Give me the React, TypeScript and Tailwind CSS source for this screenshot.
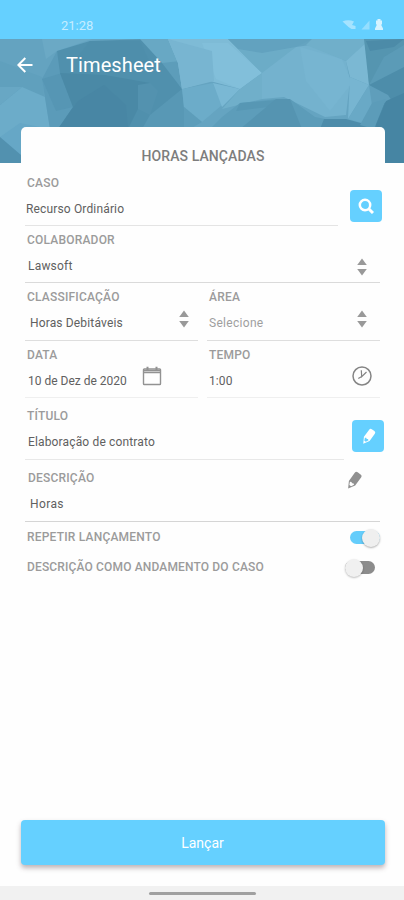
import React, { FC, ReactNode } from 'react';

interface FieldProps {
  label: string;
  value: string;
  className?: string;
  labelClass?: string;
  valueClass?: string;
  children?: ReactNode;
}

// Faceted header background: [points, color]
const facets: [string, string][] = [
  ['0,0 92,0 57,12 42,40 0,22', '#64a3c0'],
  ['42,0 92,0 57,12 46,20', '#6ba9c5'],
  ['0,22 42,38 45,66 0,66', '#60a0bd'],
  ['0,66 22,48 45,58 50,90 20,124 0,110', '#6cacc9'],
  ['0,48 22,48 0,66', '#68a7c4'],
  ['20,84 50,90 21,124 0,98', '#66a7c6'],
  ['0,98 21,116 21,124 0,124', '#5291af'],
  ['42,40 57,12 62,34 73,68 60,90 50,90', '#5b9bb9'],
  ['42,40 62,34 73,68 56,72', '#5696b4'],
  ['57,12 90,2 150,0 165,24 182,50 184,90 58,90 73,68 60,34', '#5090ad'],
  ['90,2 140,2 150,24 108,34 76,20', '#4e8eab'],
  ['60,34 105,36 150,44 138,70 128,90 58,90 73,68', '#4a89a6'],
  ['78,62 104,46 126,66 128,90 58,90', '#4886a4'],
  ['138,46 150,44 158,52 150,76 138,70', '#5392af'],
  ['150,76 182,50 186,90 142,90', '#5898b5'],
  ['140,0 202,0 180,24 162,24', '#68a8c4'],
  ['162,24 180,22 182,50', '#5d9dba'],
  ['168,0 228,0 262,34 240,50 210,42 182,50 178,24', '#7ebbd6'],
  ['202,4 228,4 262,34 240,50 216,40', '#82bfda'],
  ['168,0 212,12 214,42 182,50 178,24', '#78b5d1'],
  ['182,50 213,44 222,66 202,83 184,68', '#6cacc9'],
  ['213,44 240,50 222,68', '#7ab8d4'],
  ['184,68 202,83 190,90 184,90', '#5d9dba'],
  ['240,50 262,34 262,60 222,70', '#70afca'],
  ['228,0 312,0 296,8 262,14 238,10', '#62a2bf'],
  ['238,10 262,14 296,8 268,34 262,34', '#6cacc7'],
  ['296,8 310,6 346,22 350,42 346,76 325,78 284,58 262,60 262,34', '#74b2ce'],
  ['300,8 342,20 352,44 330,72 306,42', '#77b5d1'],
  ['312,0 366,0 366,6 346,22 306,6', '#70afca'],
  ['346,22 366,4 369,46 350,38', '#7bb8d3'],
  ['350,38 369,46 348,80', '#77b5d1'],
  ['369,46 376,60 370,86 348,80', '#69a9c6'],
  ['222,78 240,64 276,60 262,90 210,90', '#5d9dba'],
  ['240,64 290,60 284,66 236,72', '#5797b4'],
  ['276,60 290,60 310,90 240,90', '#5594b1'],
  ['290,60 315,78 325,80 330,90 302,90', '#5c9cb9'],
  ['324,80 346,80 368,86 370,90 320,90', '#4d8caa'],
  ['364,0 404,0 404,28 385,46 369,46', '#5595b0'],
  ['366,2 404,0 394,8 370,12', '#4c8ba8'],
  ['369,46 384,18 404,6 404,28 392,48', '#5b9bb7'],
  ['369,46 404,28 404,124 384,124 372,90 386,60', '#4d8daa'],
  ['369,46 388,56 392,62 372,66', '#5f9ebb'],
  ['372,64 386,60 374,90 360,86', '#5c9cb9'],
  ['386,62 404,54 404,124 384,124 376,86', '#4685a3'],
];

const HeaderBackground: FC = () => (
  <svg
    viewBox="0 0 404 124"
    className="absolute inset-0 h-full w-full"
    preserveAspectRatio="none"
  >
    <rect width="404" height="124" fill="#65a4c1" />
    {facets.map(([points, color]) => (
      <polygon key={points} points={points} fill={color} />
    ))}
  </svg>
);

const SortArrows: FC = () => (
  <svg viewBox="0 0 10 18" className="h-[18px] w-[10px]" fill="#999999">
    <path d="M5 0.5 9.8 7H0.2z" />
    <path d="M0.2 11h9.6L5 17.5z" />
  </svg>
);

const Pencil: FC<{ className: string }> = ({ className }) => (
  <svg viewBox="0 0 16 20" className={className} fill="currentColor">
    <g transform="rotate(36 8 10)">
      <path
        d="M3.900 3q0-2.200 2.200-2.200h3.800q2.200 0 2.200 2.200V13.500L8 20.500 3.900 13.500zM5.300 13.600 6.900 16.800h2.200l1.600-3.200-1.500-.8-1.200.8-1.200-.8z"
        fillRule="evenodd"
      />
    </g>
  </svg>
);

const CalendarIcon: FC = () => (
  <svg
    viewBox="0 0 20 20"
    className="h-5 w-5"
    fill="none"
    stroke="#929292"
    strokeWidth="1.4"
  >
    <rect x="1.5" y="3" width="17" height="15.5" rx="0.8" />
    <path d="M1.5 4.5h17M1.5 6.5h17" />
    <path d="M5.5 0.8v3.5M14.5 0.8v3.5" strokeWidth="2" />
  </svg>
);

const ClockIcon: FC = () => (
  <svg
    viewBox="0 0 20 20"
    className="h-5 w-5"
    fill="none"
    stroke="#858585"
    strokeWidth="1.5"
  >
    <circle cx="10" cy="10" r="9" />
    <path d="M9.3 4.2 9.7 10.6 14.5 6M9.7 10.6 6.3 12.6" strokeWidth="1.2" />
  </svg>
);

const Field: FC<FieldProps> = ({
  label,
  value,
  className = '',
  labelClass = '',
  valueClass = 'tracking-[0.1px]',
  children,
}) => (
  <div className={`flex justify-between border-b ${className}`}>
    <div className="flex flex-col gap-[10px] whitespace-nowrap">
      <span
        className={`text-[12px] leading-4 font-medium tracking-[0.2px] text-[#9b9b9b] ${labelClass}`}
      >
        {label}
      </span>
      <span className={`text-[12px] leading-4 text-[#606060] ${valueClass}`}>
        {value}
      </span>
    </div>
    {children}
  </div>
);

const App: FC = () => {
  return (
    <div className="flex h-[900px] w-[404px] flex-col overflow-hidden bg-[#fefefe] font-['Roboto',sans-serif]">
      {/* Status bar */}
      <div className="flex h-[39px] shrink-0 items-start justify-between bg-[#65d0ff] pt-[17px] pr-[21px] pl-[61px] text-[#c4edff]">
        <span className="text-[13px] leading-[18px]">21:28</span>
        <div className="flex items-center gap-[5px] pt-[2px]">
          <svg viewBox="0 0 14 11" className="h-[11px] w-[14px]" fill="#a5e3ff">
            <path d="M0.5 1.5Q6-1 12 1.5L10 5l3.5 1v3H9.5L6.5 7z" />
          </svg>
          <svg viewBox="0 0 9 10" className="h-[10px] w-[9px]" fill="#94deff">
            <path d="M8.5 0.5v9H0.5z" />
          </svg>
          <svg viewBox="0 0 8 12" className="h-[12px] w-[8px]" fill="#d7f3ff">
            <path d="M2.5 0h3v1.5H7v4H6l2 4V11H0V9.5l2-4H1v-4h1.5z" />
          </svg>
        </div>
      </div>

      {/* Header */}
      <header className="relative h-[124px] shrink-0">
        <HeaderBackground />
        <div className="relative flex items-center pt-[12px] pl-[17px] text-white">
          <svg
            viewBox="0 0 16 16"
            className="h-4 w-4"
            fill="none"
            stroke="currentColor"
            strokeWidth="2"
          >
            <path d="M15.5 8H2M8.3 1 1.3 8l7 7" />
          </svg>
          <h1 className="ml-[33px] text-[20px] leading-7 tracking-[0.1px]">
            Timesheet
          </h1>
        </div>
      </header>

      {/* Form card */}
      <main className="relative mr-[19px] ml-[21px] -mt-[36px] flex h-[460px] shrink-0 flex-col rounded-[5px] bg-[#fefefe] pr-[5px] pl-1">
        <h2 className="h-[41px] pt-[21px] pl-px text-center text-[14px] leading-4 font-medium tracking-[0.1px] text-[#7d7d7d]">
          HORAS LANÇADAS
        </h2>

        <div className="flex h-[58px] justify-between">
          <Field
            label="CASO"
            value="Recurso Ordinário"
            className="w-[313px] border-[#e4e4e4] pt-[7px] pl-[2px]"
            valueClass="-ml-px tracking-[0.15px]"
          />
          <button
            className="mt-[22px] mr-[-2px] flex h-8 w-8 items-center justify-center rounded-[4px] bg-[#65d0ff]"
            aria-label="Buscar caso"
          >
            <svg
              viewBox="0 0 16 16"
              className="h-4 w-4"
              fill="none"
              stroke="white"
            >
              <circle cx="7" cy="7" r="5.2" strokeWidth="2.5" />
              <path d="m10.7 10.7 4.3 4.3" strokeWidth="3" />
            </svg>
          </button>
        </div>

        <Field
          label="COLABORADOR"
          value="Lawsoft"
          className="h-[57px] border-[#dadada] pt-[6px] pr-[13px] pl-[2px]"
          valueClass="ml-px tracking-[0.2px]"
        >
          <div className="pt-[26px]">
            <SortArrows />
          </div>
        </Field>

        <div className="flex h-[58px] justify-between">
          <Field
            label="CLASSIFICAÇÃO"
            value="Horas Debitáveis"
            className="w-[173px] border-[#dedede] pt-[6px] pr-[9px] pl-[2px]"
            valueClass="ml-[3px] tracking-[0.15px]"
          >
            <div className="pt-[21px]">
              <SortArrows />
            </div>
          </Field>
          <Field
            label="ÁREA"
            value="Selecione"
            className="w-[173px] border-[#dedede] pt-[6px] pr-[13px] pl-[2px]"
            valueClass="opacity-60 tracking-[0.3px]"
          >
            <div className="pt-[21px]">
              <SortArrows />
            </div>
          </Field>
        </div>

        <div className="flex h-[57px] justify-between">
          <Field
            label="DATA"
            value="10 de Dez de 2020"
            className="w-[173px] border-[#efefef] pt-[6px] pr-[36px] pl-[2px]"
            valueClass="ml-px"
          >
            <div className="pt-[19px]">
              <CalendarIcon />
            </div>
          </Field>
          <Field
            label="TEMPO"
            value="1:00"
            className="w-[173px] border-[#efefef] pt-[6px] pr-[8px] pl-[2px]"
          >
            <div className="pt-[19px]">
              <ClockIcon />
            </div>
          </Field>
        </div>

        <div className="flex h-[62px] justify-between">
          <Field
            label="TÍTULO"
            value="Elaboração de contrato"
            className="w-[319px] border-[#e8e8e8] pt-[10px] pl-[2px]"
            valueClass="ml-px tracking-[0.15px]"
          />
          <button
            className="mt-[22px] mr-[-4px] flex h-8 w-8 items-center justify-center rounded-[4px] bg-[#65d0ff]"
            aria-label="Editar título"
          >
            <Pencil className="h-[17px] w-[15px] text-white" />
          </button>
        </div>

        <Field
          label="DESCRIÇÃO"
          value="Horas"
          className="h-[62px] border-[#d5d5d5] pt-[10px] pr-[18px] pl-[2px]"
          labelClass="ml-px"
          valueClass="ml-[3px] tracking-[0.4px]"
        >
          <Pencil className="mt-px h-[19px] w-[16px] text-[#909090]" />
        </Field>

        {/* Toggles */}
        <div className="flex h-[29px] items-center justify-between pl-[2px] text-[12px] font-medium tracking-[0.2px] text-[#9b9b9b]">
          <span>REPETIR LANÇAMENTO</span>
          <button
            className="flex h-[13px] w-[30px] translate-y-[1px] items-center justify-end rounded-full bg-[#65cdfb]"
            aria-label="Repetir lançamento"
          >
            <span className="h-[18px] w-[18px] shrink-0 rounded-full bg-[#efefef] shadow-[0_1px_2px_rgba(0,0,0,0.3)]" />
          </button>
        </div>
        <div className="flex h-[31px] items-center justify-between pr-[5px] pl-[2px] text-[12px] font-medium tracking-[0.15px] text-[#9b9b9b]">
          <span>DESCRIÇÃO COMO ANDAMENTO DO CASO</span>
          <button
            className="flex h-[13px] w-[30px] translate-y-[1px] items-center rounded-full bg-[#8c8c8c]"
            aria-label="Descrição como andamento do caso"
          >
            <span className="h-[18px] w-[18px] shrink-0 rounded-full bg-[#f0f0f0] shadow-[0_1px_2px_rgba(0,0,0,0.25)]" />
          </button>
        </div>
      </main>

      <div className="flex-1" />

      {/* Submit */}
      <button className="mr-[19px] mb-[21px] ml-[21px] h-[45px] shrink-0 rounded-[4px] bg-[#65d0ff] pt-[2px] pr-px text-[14px] text-white shadow-[0_3px_5px_rgba(70,40,50,0.35)]">
        Lançar
      </button>

      {/* Gesture bar */}
      <div className="flex h-[14px] shrink-0 justify-center bg-[#f1f1f1] pt-[6px]">
        <div className="h-[3px] w-[107px] rounded-full bg-[#a0a0a0]" />
      </div>
    </div>
  );
};

export default App;
